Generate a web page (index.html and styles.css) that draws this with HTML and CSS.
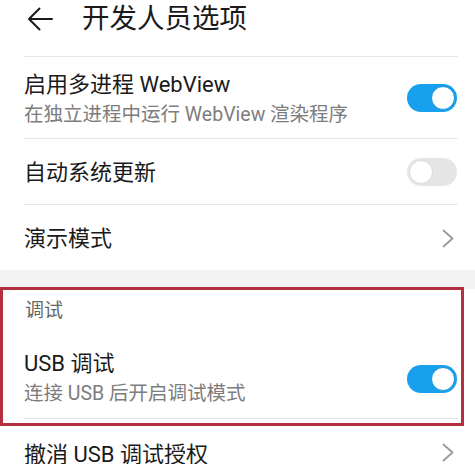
FILE: index.html
```html
<!DOCTYPE html>
<html lang="zh-CN">
<head>
<meta charset="utf-8">
<title>开发人员选项</title>
<link rel="stylesheet" href="styles.css">
</head>
<body>
<div class="page">
  <header class="appbar">
    <svg class="back" width="26" height="24" viewBox="0 0 26 24" aria-hidden="true">
      <path d="M25 12H2M12.5 1.5L2 12l10.5 10.5" fill="none" stroke="#1a1a1a" stroke-width="2" stroke-linecap="round" stroke-linejoin="round"/>
    </svg>
    <h1 class="title">开发人员选项</h1>
  </header>

  <ul class="list">
    <li class="row two first">
      <div class="text">
        <div class="main">启用多进程 WebView</div>
        <div class="sub">在独立进程中运行 WebView 渲染程序</div>
      </div>
      <span class="switch on"><span class="thumb"></span></span>
    </li>
    <li class="row single">
      <div class="text"><div class="main">自动系统更新</div></div>
      <span class="switch off"><span class="thumb"></span></span>
    </li>
    <li class="row single last">
      <div class="text"><div class="main">演示模式</div></div>
      <svg class="chev" width="12" height="19" viewBox="0 0 12 19" aria-hidden="true"><path d="M1.5 1.5l9 8-9 8" fill="none" stroke="#9a9a9a" stroke-width="1.8" stroke-linecap="round" stroke-linejoin="round"/></svg>
    </li>
  </ul>

  <div class="gap"></div>

  <section class="group">
    <div class="cat">调试</div>
    <ul class="list">
      <li class="row two usb">
        <div class="text">
          <div class="main">USB 调试</div>
          <div class="sub">连接 USB 后开启调试模式</div>
        </div>
        <span class="switch on"><span class="thumb"></span></span>
      </li>
      <li class="row single last revoke">
        <div class="text"><div class="main">撤消 USB 调试授权</div></div>
        <svg class="chev" width="12" height="19" viewBox="0 0 12 19" aria-hidden="true"><path d="M1.5 1.5l9 8-9 8" fill="none" stroke="#9a9a9a" stroke-width="1.8" stroke-linecap="round" stroke-linejoin="round"/></svg>
      </li>
    </ul>
  </section>

  <div class="highlight"></div>
</div>
</body>
</html>
```

FILE: styles.css
```css
html, body {
  margin: 0;
  padding: 0;
  background: #ffffff;
}

body {
  font-family: Roboto, "Noto Sans CJK SC", "Noto Sans", sans-serif;
  color: #1a1a1a;
}

.page {
  position: relative;
  width: 475px;
  height: 464px;
  overflow: hidden;
  background: #ffffff;
}

.appbar {
  height: 56px;
  display: flex;
  align-items: flex-start;
  padding-left: 27px;
  box-sizing: border-box;
}

.back {
  margin-top: 7px;
  flex: none;
}

.title {
  margin: 0 0 0 29px;
  font-size: 27.5px;
  font-weight: 400;
  line-height: 38px;
  color: #1a1a1a;
}

.list {
  list-style: none;
  margin: 0;
  padding: 0;
}

.row {
  display: flex;
  align-items: center;
  justify-content: space-between;
  margin: 0 17px 0 24px;
  border-bottom: 1px solid #e6e6e6;
}

.row.first {
  border-top: 1px solid #e6e6e6;
}

.row.last {
  border-bottom: none;
}

.row.two {
  height: 81px;
}

.row.two .text {
  padding-top: 4px;
}

.row.usb {
  height: 78px;
}

.row.usb .text {
  padding-top: 0;
}

.row.single {
  height: 65px;
}

.row.single .text {
  padding-top: 3px;
}

.row.revoke {
  height: 66px;
}

.row.revoke .text {
  padding-top: 6px;
}

.main {
  font-size: 22px;
  line-height: 30px;
  color: #1a1a1a;
  white-space: nowrap;
}

.sub {
  font-size: 19.5px;
  line-height: 30px;
  color: #7d7d7d;
  white-space: nowrap;
}

.switch {
  position: relative;
  flex: none;
  width: 50px;
  height: 28px;
  border-radius: 14px;
  margin-right: 1px;
  box-sizing: border-box;
}

.switch .thumb {
  position: absolute;
  top: 2px;
  width: 24px;
  height: 24px;
  border-radius: 50%;
  background: #ffffff;
  box-sizing: border-box;
}

.switch.on {
  background: #16a0ee;
}

.switch.on .thumb {
  right: 2px;
  border: 1px solid #138fd6;
}

.switch.off {
  background: #e5e5e5;
}

.switch.off .thumb {
  left: 2px;
  border: 1px solid #dadada;
}

.chev {
  flex: none;
  margin-right: 4px;
  margin-top: 1px;
}

.gap {
  height: 19px;
  background: #f4f4f4;
}

.cat {
  height: 51px;
  box-sizing: border-box;
  padding: 9px 0 0 25px;
  font-size: 19px;
  line-height: 26px;
  color: #666666;
}

.highlight {
  position: absolute;
  left: 0;
  top: 287px;
  width: 464px;
  height: 139px;
  border: 3px solid #b3303c;
  box-sizing: border-box;
  pointer-events: none;
}
```
